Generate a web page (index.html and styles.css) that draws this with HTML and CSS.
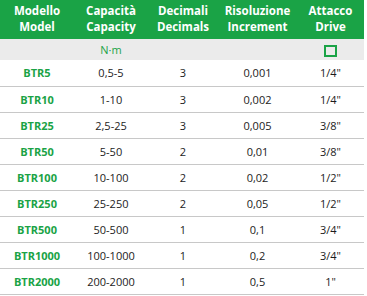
FILE: index.html
```html
<!DOCTYPE html>
<html lang="it">
<head>
<meta charset="utf-8">
<link rel="stylesheet" href="styles.css">
</head>
<body>
<table class="spec">
  <colgroup>
    <col class="c1"><col class="c2"><col class="c3"><col class="c4"><col class="c5">
  </colgroup>
  <thead>
    <tr class="head">
      <th>Modello<br>Model</th>
      <th>Capacità<br>Capacity</th>
      <th>Decimali<br>Decimals</th>
      <th>Risoluzione<br>Increment</th>
      <th>Attacco<br>Drive</th>
    </tr>
    <tr class="units">
      <td></td>
      <td class="unit">N·m</td>
      <td></td>
      <td></td>
      <td><span class="square"></span></td>
    </tr>
  </thead>
  <tbody>
    <tr><td class="model">BTR5</td><td>0,5-5</td><td>3</td><td>0,001</td><td>1/4"</td></tr>
    <tr><td class="model">BTR10</td><td>1-10</td><td>3</td><td>0,002</td><td>1/4"</td></tr>
    <tr><td class="model">BTR25</td><td>2,5-25</td><td>3</td><td>0,005</td><td>3/8"</td></tr>
    <tr><td class="model">BTR50</td><td>5-50</td><td>2</td><td>0,01</td><td>3/8"</td></tr>
    <tr><td class="model">BTR100</td><td>10-100</td><td>2</td><td>0,02</td><td>1/2"</td></tr>
    <tr><td class="model">BTR250</td><td>25-250</td><td>2</td><td>0,05</td><td>1/2"</td></tr>
    <tr><td class="model">BTR500</td><td>50-500</td><td>1</td><td>0,1</td><td>3/4"</td></tr>
    <tr><td class="model">BTR1000</td><td>100-1000</td><td>1</td><td>0,2</td><td>3/4"</td></tr>
    <tr><td class="model">BTR2000</td><td>200-2000</td><td>1</td><td>0,5</td><td>1"</td></tr>
  </tbody>
</table>
</body>
</html>
```
FILE: styles.css
```css
html, body {
  margin: 0;
  padding: 0;
  background: #ffffff;
}

.spec {
  width: 364px;
  border-collapse: collapse;
  table-layout: fixed;
  font-family: "Open Sans", "Liberation Sans", sans-serif;
  font-size: 11px;
  color: #1c1c1c;
}

.c1 { width: 74px; }
.c2 { width: 74px; }
.c3 { width: 70px; }
.c4 { width: 79px; }
.c5 { width: 67px; }

.spec th,
.spec td {
  padding: 0;
  text-align: center;
  vertical-align: middle;
}

.head {
  background: #1aa346;
  height: 39px;
}

.head th {
  color: #ffffff;
  font-weight: 700;
  font-size: 11.5px;
  line-height: 16px;
  padding-bottom: 1px;
}

.units {
  background: #ebebeb;
  height: 21px;
}

.unit {
  color: #1aa346;
  font-size: 11px;
}

.square {
  display: inline-block;
  width: 9px;
  height: 8px;
  border: 2px solid #1aa346;
  vertical-align: middle;
}

tbody tr {
  height: 26px;
  border-bottom: 1px solid #c8c8c8;
}

.model {
  color: #1aa346;
  font-weight: 700;
}
```
